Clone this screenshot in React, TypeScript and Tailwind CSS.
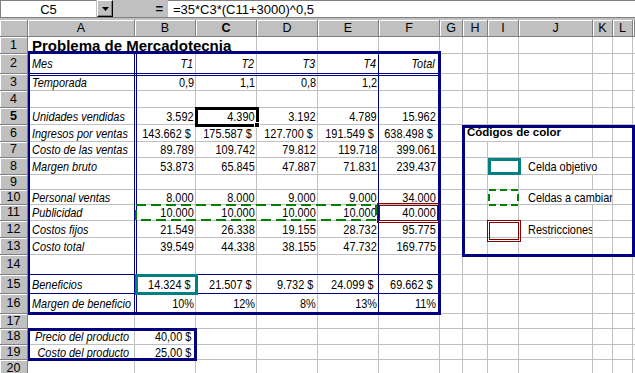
import React from 'react';

type Kind =
  | 'lab' | 'labR' | 'hdr' | 'hdrF' | 'num' | 'numF' | 'usd' | 'usdF'
  | 'pct' | 'pctF' | 'empty' | 'title' | 'legTitle' | 'leg';

interface C { t?: string; k?: Kind; span?: 1 | 2 | 3 }

const kindCls: Record<Kind, string> = {
  lab: 'justify-start pl-[4px] italic',
  labR: 'justify-end pr-[5px] italic',
  hdr: 'justify-end pr-[2px] italic',
  hdrF: 'justify-end pr-[4px] italic',
  num: 'justify-end pr-[1px]',
  numF: 'justify-end pr-[3px]',
  usd: 'justify-end pr-[4px]',
  usdF: 'justify-end pr-[6px]',
  pct: 'justify-end pr-[1px]',
  pctF: 'justify-end pr-[3px]',
  empty: '',
  title: 'justify-start pl-[4px] font-bold text-[15px]',
  legTitle: 'justify-start pl-[4px] font-bold text-[11.5px]',
  leg: 'justify-start pl-[9px]',
};

// narrow look: 13px glyphs squeezed horizontally, anchored on the aligned side
const textCls: Record<Kind, string> = {
  lab: 'inline-block origin-left scale-x-[0.84]',
  labR: 'inline-block origin-right scale-x-[0.84]',
  hdr: 'inline-block origin-right scale-x-[0.84]',
  hdrF: 'inline-block origin-right scale-x-[0.84]',
  num: 'inline-block origin-right scale-x-[0.84]',
  numF: 'inline-block origin-right scale-x-[0.84]',
  usd: 'inline-block origin-right scale-x-[0.84]',
  usdF: 'inline-block origin-right scale-x-[0.84]',
  pct: 'inline-block origin-right scale-x-[0.84]',
  pctF: 'inline-block origin-right scale-x-[0.84]',
  empty: '',
  title: '',
  legTitle: '',
  leg: 'inline-block origin-left scale-x-[0.84]',
};

const spanCls: Record<number, string> = { 1: '', 2: 'col-span-2', 3: 'col-span-3' };

const E: C = {};
const L = (t: string): C => ({ t, k: 'lab' });
const LR = (t: string): C => ({ t, k: 'labR' });
const H = (t: string): C => ({ t, k: 'hdr' });
const HF = (t: string): C => ({ t, k: 'hdrF' });
const N = (t: string): C => ({ t, k: 'num' });
const NF = (t: string): C => ({ t, k: 'numF' });
const U = (t: string): C => ({ t, k: 'usd' });
const UF = (t: string): C => ({ t, k: 'usdF' });
const P = (t: string): C => ({ t, k: 'pct' });
const PF = (t: string): C => ({ t, k: 'pctF' });
const G7: C[] = [E, E, E, E, E, E, E];

const rows: C[][] = [
  [{ t: 'Problema de Mercadotecnia', k: 'title', span: 3 }, E, E, E, ...G7],
  [L('Mes'), H('T1'), H('T2'), H('T3'), H('T4'), HF('Total'), ...G7],
  [L('Temporada'), N('0,9'), N('1,1'), N('0,8'), N('1,2'), E, ...G7],
  [E, E, E, E, E, E, ...G7],
  [L('Unidades vendidas'), N('3.592'), N('4.390'), N('3.192'), N('4.789'), NF('15.962'), ...G7],
  [L('Ingresos por ventas'), U('143.662 $'), U('175.587 $'), U('127.700 $'), U('191.549 $'), UF('638.498 $'),
    E, { t: 'Códigos de color', k: 'legTitle', span: 3 }, E, E, E],
  [L('Costo de las ventas'), N('89.789'), N('109.742'), N('79.812'), N('119.718'), NF('399.061'), ...G7],
  [L('Margen bruto'), N('53.873'), N('65.845'), N('47.887'), N('71.831'), NF('239.437'),
    E, E, E, { t: 'Celda objetivo', k: 'leg', span: 2 }, E, E],
  [E, E, E, E, E, E, ...G7],
  [L('Personal ventas'), N('8.000'), N('8.000'), N('9.000'), N('9.000'), NF('34.000'),
    E, E, E, { t: 'Celdas a cambiar', k: 'leg', span: 2 }, E, E],
  [L('Publicidad'), N('10.000'), N('10.000'), N('10.000'), N('10.000'), NF('40.000'), ...G7],
  [L('Costos fijos'), N('21.549'), N('26.338'), N('19.155'), N('28.732'), NF('95.775'),
    E, E, E, { t: 'Restricciones', k: 'leg' }, E, E, E],
  [L('Costo total'), N('39.549'), N('44.338'), N('38.155'), N('47.732'), NF('169.775'), ...G7],
  [E, E, E, E, E, E, ...G7],
  [L('Beneficios'), U('14.324 $'), U('21.507 $'), U('9.732 $'), U('24.099 $'), UF('69.662 $'), ...G7],
  [L('Margen de beneficio'), P('10%'), P('12%'), P('8%'), P('13%'), PF('11%'), ...G7],
  [E, E, E, E, E, E, ...G7],
  [LR('Precio del producto'), U('40,00 $'), E, E, E, E, ...G7],
  [LR('Costo del producto'), U('25,00 $'), E, E, E, E, ...G7],
  [E, E, E, E, E, E, ...G7],
];

const cols = ['A', 'B', 'C', 'D', 'E', 'F', 'G', 'H', 'I', 'J', 'K', 'L', ''];

const GRID =
  'grid grid-cols-[28px_107px_61px_61px_61px_61px_61px_23px_25px_31px_74px_20px_20px_2px] grid-rows-[17px_17px_20px_17px_17px_17px_17px_16px_17px_15px_15px_16px_17px_17px_20px_19px_20px_15px_16px_15px_17px]';

const HEAD =
  'flex items-center justify-center bg-[#c0c0c0] border-r border-b border-[#808080] shadow-[inset_1px_1px_0_#ffffff] text-[12.5px] overflow-hidden';

function Cell({ c, last }: { c: C; last: boolean }) {
  const k = c.k ?? 'empty';
  const border = last ? 'border-b border-[#c0c0c0]' : 'border-b border-r border-[#c0c0c0]';
  return (
    <div className={`flex items-center overflow-hidden whitespace-nowrap ${border} ${kindCls[k]} ${spanCls[c.span ?? 1]}`}>
      {c.t ? <span className={`shrink-0 ${textCls[k]}`}>{c.t}</span> : null}
    </div>
  );
}

function Dashed({ w, h, dash }: { w: number; h: number; dash: string }) {
  return (
    <svg width={w} height={h} className="block">
      <rect x={1} y={1} width={w - 2} height={h - 2} fill="none" stroke="#008000" strokeWidth={2} strokeDasharray={dash} />
    </svg>
  );
}

export default function App() {
  return (
    <div className="w-[635px] h-[373px] overflow-hidden bg-white text-black font-['Liberation_Sans',Arial,sans-serif] text-[13px] leading-none">
      {/* Formula bar */}
      <div className="h-[20px] bg-[#c0c0c0] flex flex-col">
        <div className="h-[17px] flex">
          <div className="w-[96px] h-[17px] bg-white border-t border-l border-[#808080] flex items-center justify-center text-[13px]">
            C5
          </div>
          <div className="ml-[1px] w-[16px] h-[17px] bg-[#c0c0c0] border border-t-white border-l-white border-r-black border-b-black shadow-[inset_-1px_-1px_0_#808080] flex items-center justify-center">
            <svg width="7" height="4" viewBox="0 0 7 4" className="block">
              <polygon points="0,0 7,0 3.5,4" fill="#000" />
            </svg>
          </div>
          <div className="w-[55px] h-[17px] flex items-center justify-end pr-[5px] text-[13px] font-bold">=</div>
          <div className="flex-1 h-[17px] bg-white border-t border-[#808080] flex items-center pl-[5px] text-[13px]">
            =35*C3*(C11+3000)^0,5
          </div>
        </div>
        <div className="h-px bg-[#808080]" />
      </div>

      {/* Sheet */}
      <div className="relative">
        <div className={GRID}>
          <div className={HEAD} />
          {cols.map((c, i) => (
            <div key={'h' + i} className={`${HEAD} ${c === 'C' ? 'font-bold' : ''}`}>{c}</div>
          ))}
          {rows.map((r, ri) => (
            <React.Fragment key={'r' + ri}>
              <div className={`${HEAD} ${ri === 4 ? 'font-bold' : ''}`}>{ri + 1}</div>
              {r.map((c, ci) => (
                <Cell key={ci} c={c} last={ci === r.length - 1} />
              ))}
            </React.Fragment>
          ))}
        </div>

        {/* Borders and decorations drawn over the cells */}
        <div className={`absolute inset-0 pointer-events-none ${GRID}`}>
          <div className="col-[2/8] row-[16/17] -mt-[1px] border-t border-b border-[#000080]" />
          <div className="col-[2/8] row-[3/4] -mb-[2px] border-b-[3px] border-double border-[#000080]" />
          <div className="col-[2/3] row-[3/18] -mr-[2px] border-r-[3px] border-double border-[#000080]" />
          <div className="col-[6/7] row-[3/18] border-r border-[#000080]" />
          <div className="col-[2/8] row-[3/18] -mt-[3px] -mr-[1px] -mb-[1px] border-t-[3px] border-r-[3px] border-b-[3px] border-l-[2px] border-[#000080]" />
          <div className="col-[2/4] row-[19/21] -mt-[1px] -mr-[1px] -mb-[1px] border-t-[3px] border-r-[3px] border-b-[3px] border-l-[2px] border-[#000080]" />
          <div className="col-[9/14] row-[7/15] -ml-[1px] -mr-[2px] -mb-[2px] border-[3px] border-[#000080]" />
          <div className="col-[10/11] row-[9/10] -mr-[2px] border-[3px] border-[#008080]" />
          <div className="col-[10/11] row-[11/12] -mt-[1px] -mb-[1px]">
            <Dashed w={31} h={17} dash="7 4" />
          </div>
          <div className="col-[10/11] row-[13/14] -ml-[1px] -mr-[2px] -mt-[1px] -mb-[4px] border-[3px] border-double border-[#800000]" />
          <div className="col-[3/7] row-[12/13] -mt-[1px] mr-[2px]">
            <Dashed w={242} h={17} dash="10 5" />
          </div>
          <div className="col-[7/8] row-[12/13] -ml-[2px] -mt-[2px] -mb-[2px] border-[3px] border-double border-[#800000]" />
          <div className="col-[3/4] row-[16/17] -mt-[1px] -mr-[2px] -mb-[1px] border-[3px] border-[#008080]" />
          <div className="relative col-[4/5] row-[6/7] -ml-[1px] -mt-[1px] -mr-[2px] -mb-[2px] border-[3px] border-black">
            <span className="absolute -right-[4px] -bottom-[4px] w-[6px] h-[6px] bg-black border border-white" />
          </div>
        </div>
      </div>
    </div>
  );
}
